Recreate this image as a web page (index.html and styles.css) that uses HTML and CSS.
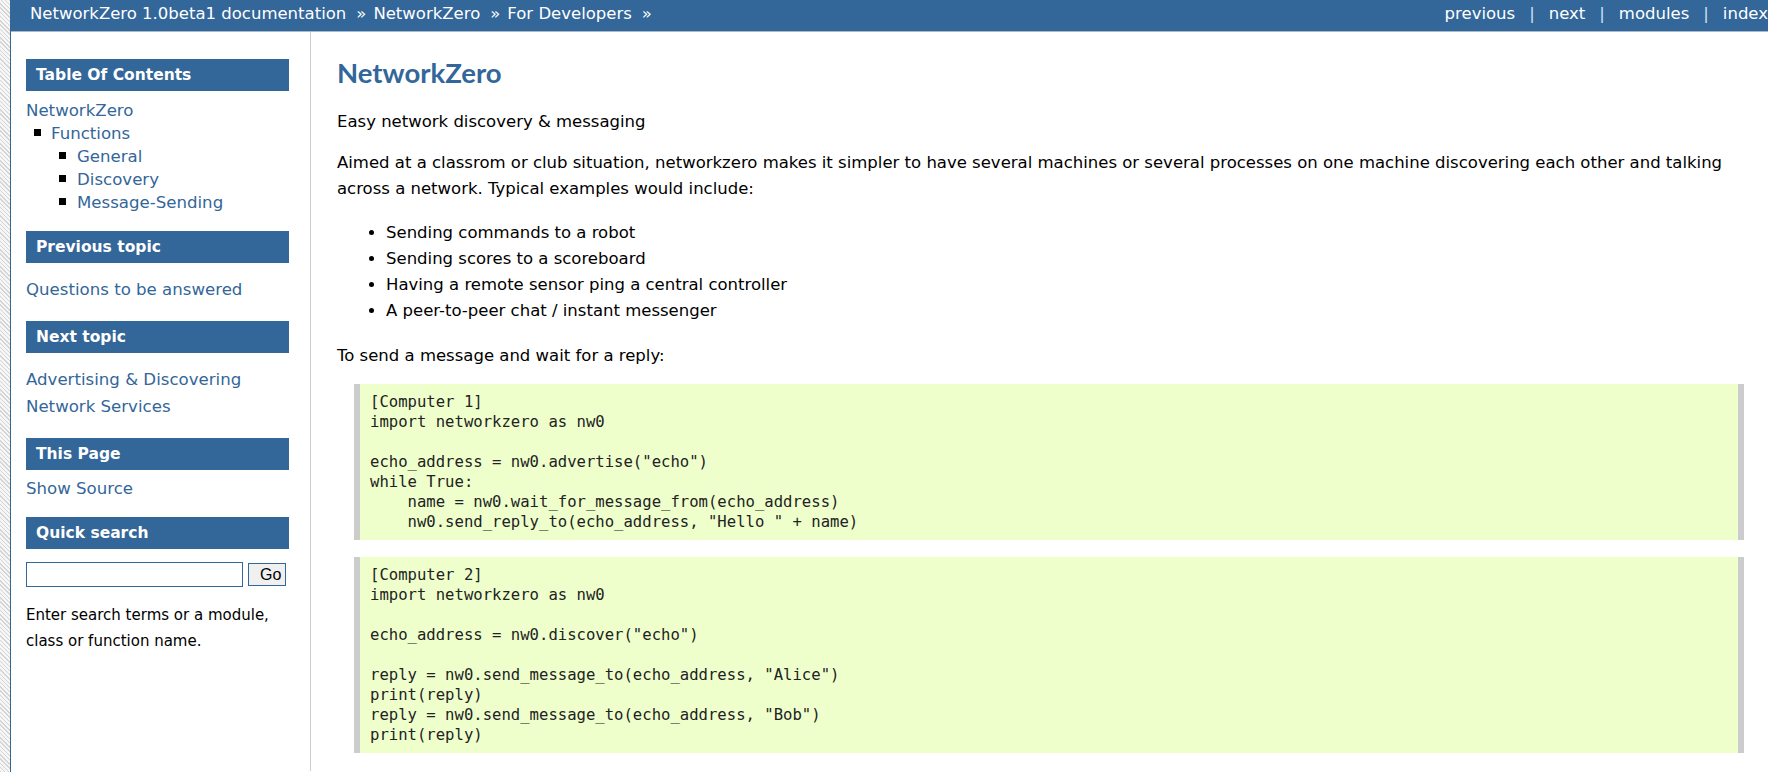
FILE: index.html
```html
<!DOCTYPE html>
<html>
<head>
<meta charset="utf-8">
<title>NetworkZero — NetworkZero 1.0beta1 documentation</title>
<link rel="stylesheet" href="styles.css">
</head>
<body>
<div class="page">
  <div class="relbar">
    <div class="crumbs">
      <a href="#">NetworkZero 1.0beta1 documentation</a><span class="raquo">»</span><a href="#">NetworkZero</a><span class="raquo">»</span><a href="#">For Developers</a><span class="raquo">»</span>
    </div>
    <div class="navlinks">
      <a href="#">previous</a><span class="sep">|</span><a href="#">next</a><span class="sep">|</span><a href="#">modules</a><span class="sep">|</span><a href="#">index</a>
    </div>
  </div>
  <div class="document">
    <div class="sidebar">
      <h3 class="side-title">Table Of Contents</h3>
      <ul class="toc">
        <li class="toc-top"><a href="#">NetworkZero</a>
          <ul class="toc-l1">
            <li class="sq"><a href="#">Functions</a>
              <ul class="toc-l2">
                <li class="sq"><a href="#">General</a></li>
                <li class="sq"><a href="#">Discovery</a></li>
                <li class="sq"><a href="#">Message-Sending</a></li>
              </ul>
            </li>
          </ul>
        </li>
      </ul>
      <h3 class="side-title">Previous topic</h3>
      <p class="side-link"><a href="#">Questions to be answered</a></p>
      <h3 class="side-title">Next topic</h3>
      <p class="side-link"><a href="#">Advertising &amp; Discovering Network Services</a></p>
      <h3 class="side-title">This Page</h3>
      <ul class="this-page">
        <li><a href="#">Show Source</a></li>
      </ul>
      <h3 class="side-title">Quick search</h3>
      <form class="search">
        <input class="search-input" type="text">
        <button class="search-go" type="button">Go</button>
      </form>
      <p class="search-hint">Enter search terms or a module, class or function name.</p>
    </div>
    <div class="body">
      <h1 class="title">NetworkZero</h1>
      <p class="para">Easy network discovery &amp; messaging</p>
      <p class="para">Aimed at a classrom or club situation, networkzero makes it simpler to have several machines or several processes on one machine discovering each other and talking across a network. Typical examples would include:</p>
      <ul class="bullets">
        <li>Sending commands to a robot</li>
        <li>Sending scores to a scoreboard</li>
        <li>Having a remote sensor ping a central controller</li>
        <li>A peer-to-peer chat / instant messenger</li>
      </ul>
      <p class="para">To send a message and wait for a reply:</p>
<pre class="code">[Computer 1]
import networkzero as nw0

echo_address = nw0.advertise("echo")
while True:
    name = nw0.wait_for_message_from(echo_address)
    nw0.send_reply_to(echo_address, "Hello " + name)</pre>
<pre class="code">[Computer 2]
import networkzero as nw0

echo_address = nw0.discover("echo")

reply = nw0.send_message_to(echo_address, "Alice")
print(reply)
reply = nw0.send_message_to(echo_address, "Bob")
print(reply)</pre>
    </div>
  </div>
</div>
</body>
</html>
```
FILE: styles.css
```css
html, body {
  margin: 0;
  padding: 0;
}
body {
  font-family: "DejaVu Sans", "Liberation Sans", sans-serif;
  font-size: 16px;
  color: #000;
  background: repeating-linear-gradient(45deg, #d4d4d4 0 1px, #f6f6f6 1px 3px);
  overflow: hidden;
}
a {
  color: #336699;
  text-decoration: none;
}
.page {
  margin-left: 10px;
  border-left: 1px solid #336699;
  background: #fff;
  min-height: 772px;
}
.relbar {
  display: flex;
  justify-content: space-between;
  align-items: center;
  height: 32px;
  box-sizing: border-box;
  padding: 0 0 5px 19px;
  background: #336699;
  border-bottom: 1px solid #a9b8c8;
  color: #fff;
  font-size: 16.5px;
  white-space: nowrap;
}
.relbar a {
  color: #fff;
}
.raquo {
  margin: 0 7px 0 10px;
}
.sep {
  margin: 0 14px;
  color: #cfe0f0;
}
.document {
  display: flex;
  min-height: 739px;
}
.sidebar {
  width: 300px;
  flex: none;
  border-right: 1px solid #cccccc;
  box-sizing: border-box;
  padding: 27px 21px 0 15px;
  font-size: 16.6px;
}
.side-title {
  margin: 0;
  height: 32px;
  line-height: 32px;
  padding: 0 10px;
  background: #336699;
  color: #fff;
  font-size: 15.5px;
  font-weight: bold;
}
.toc {
  list-style: none;
  margin: 8px 0 17px;
  padding: 0;
  line-height: 23px;
}
.toc-l1, .toc-l2 {
  list-style: none;
  margin: 0;
  padding: 0 0 0 8px;
}
.toc-l2 {
  padding-left: 25px;
}
.sq::before {
  content: "";
  display: inline-block;
  width: 7px;
  height: 7px;
  background: #000;
  margin-right: 10px;
  vertical-align: 3px;
}
.toc-l2 .sq::before {
  margin-right: 11px;
}
.side-link {
  margin: 13px 0 18px;
  line-height: 27px;
}
.this-page {
  list-style: none;
  margin: 7px 0 17px;
  padding: 0;
  line-height: 23px;
}
.search {
  display: flex;
  align-items: center;
  gap: 5px;
  margin: 13px 0 0;
}
.search-input {
  width: 217px;
  height: 25px;
  box-sizing: border-box;
  border: 1px solid #336699;
  margin: 0;
  padding: 0 3px;
}
.search-go {
  width: 38px;
  height: 23px;
  box-sizing: border-box;
  border: 1px solid #336699;
  background: #f0f0f0;
  font-family: "Liberation Sans", Arial, sans-serif;
  font-size: 16px;
  line-height: 21px;
  text-align: left;
  padding: 0 0 0 11px;
  margin: 0;
  color: #000;
}
.search-hint {
  margin: 15px 0 0;
  font-size: 15px;
  line-height: 26px;
}
.body {
  flex: 1;
  min-width: 0;
  padding: 24px 24px 0 26px;
  font-size: 16.5px;
}
.title {
  margin: 0 0 19px;
  font-family: Lato, "DejaVu Sans", sans-serif;
  font-size: 27.5px;
  font-weight: bold;
  color: #336699;
  line-height: 34px;
}
.para {
  margin: 15px 0;
  line-height: 26px;
}
.bullets {
  margin: 18px 0 19px;
  padding-left: 49px;
  line-height: 26px;
}
.code {
  margin: 15px 0 17px 17px;
  padding: 8px 10px;
  background: #eeffcc;
  border-left: 6px solid #cccccc;
  border-right: 6px solid #cccccc;
  font-family: "DejaVu Sans Mono", "Liberation Mono", monospace;
  font-size: 15.6px;
  line-height: 20px;
  color: #222;
}
```
